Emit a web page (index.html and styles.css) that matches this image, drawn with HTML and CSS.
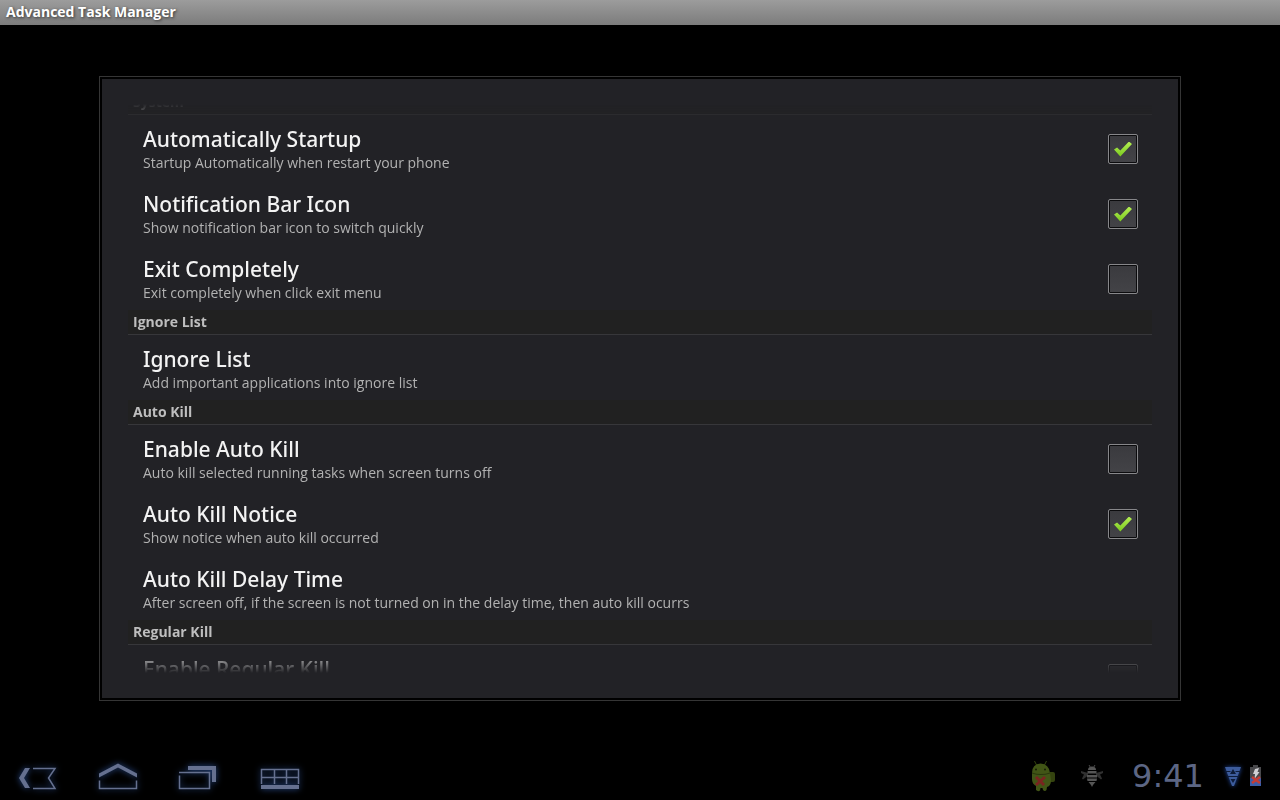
FILE: index.html
```html
<!DOCTYPE html>
<html lang="en">
<head>
<meta charset="utf-8">
<title>Advanced Task Manager</title>
<link rel="stylesheet" href="styles.css">
</head>
<body>
<header class="titlebar"><h1 class="titlebar-text">Advanced Task Manager</h1></header>
<main class="stage">
  <section class="panel">
    <div class="list">
      <h2 class="category category-first">System</h2>
      <label class="row"><span class="row-text"><span class="row-title">Automatically Startup</span><span class="row-summary">Startup Automatically when restart your phone</span></span><input class="check" type="checkbox" checked></label>
      <label class="row"><span class="row-text"><span class="row-title">Notification Bar Icon</span><span class="row-summary">Show notification bar icon to switch quickly</span></span><input class="check" type="checkbox" checked></label>
      <label class="row"><span class="row-text"><span class="row-title">Exit Completely</span><span class="row-summary">Exit completely when click exit menu</span></span><input class="check" type="checkbox"></label>
      <h2 class="category">Ignore List</h2>
      <button class="row" type="button"><span class="row-text"><span class="row-title">Ignore List</span><span class="row-summary">Add important applications into ignore list</span></span></button>
      <h2 class="category">Auto Kill</h2>
      <label class="row"><span class="row-text"><span class="row-title">Enable Auto Kill</span><span class="row-summary">Auto kill selected running tasks when screen turns off</span></span><input class="check" type="checkbox"></label>
      <label class="row"><span class="row-text"><span class="row-title">Auto Kill Notice</span><span class="row-summary">Show notice when auto kill occurred</span></span><input class="check" type="checkbox" checked></label>
      <button class="row" type="button"><span class="row-text"><span class="row-title">Auto Kill Delay Time</span><span class="row-summary">After screen off, if the screen is not turned on in the delay time, then auto kill ocurrs</span></span></button>
      <h2 class="category">Regular Kill</h2>
      <label class="row"><span class="row-text"><span class="row-title">Enable Regular Kill</span></span><input class="check" type="checkbox"></label>
    </div>
  </section>
</main>
<footer class="sysbar">
  <nav class="nav">
    <button class="nav-button" type="button" aria-label="Back"><svg class="nav-icon" viewBox="0 752 80 48"><path class="solid" d="M25 768h5l-6 10 6 10h-5l-6-10z"/><path class="line" d="M33 768.500H55L48.500 778 55 788.500H33"/></svg></button>
    <button class="nav-button" type="button" aria-label="Home"><svg class="nav-icon" viewBox="80 752 80 48"><path class="solid" d="M99 773.500 118 763.500l19 10v4L118 767.500l-19 10z"/><path class="line" d="M99.500 780.500v8h37v-8"/></svg></button>
    <button class="nav-button" type="button" aria-label="Recent apps"><svg class="nav-icon" viewBox="160 752 80 48"><path class="solid" d="M188 766h28v16h-4v-12h-24z"/><path class="line" d="M179 772.500h30.500v16h-30V775.500"/></svg></button>
    <button class="nav-button" type="button" aria-label="Keyboard"><svg class="nav-icon" viewBox="240 752 80 48"><path class="line" d="M261.500 784v-14.500h37V784M261 777.500h38M274.500 769v15M286.500 769v15"/><path class="solid" d="M261 785h38v4h-38z"/></svg></button>
  </nav>
  <div class="status">
    <svg class="icon-droid" viewBox="1030 760 26 34"><path d="m1034.500 762 2 4m10-4-2 4" stroke="#35460f"/><rect x="1048" y="773" width="7" height="10" rx="2" fill="#34430f"/><path fill="#415516" d="M1032 774q0-9 8.500-9.500 8.500.5 9.500 9.500l1 7q0 6-4 7l-.5 3q-1.500 2-3.500 0l-.5-2h-2l-.5 2.500q-2 1.500-4-.5v-4q-4-2-4-7z"/><path fill="#2a380e" d="M1032 773.500q9 3 18 0v1q-9 3-18 0z"/><circle cx="1036" cy="770.500" r="1" fill="#161d08"/><circle cx="1045" cy="770.500" r="1" fill="#161d08"/><path d="m1036 778 8 8m1-8-9 8" stroke="#7a2420" stroke-width="3"/></svg>
    <svg class="icon-bee" viewBox="1080 766 24 24"><path d="M1088 775l-7-2v2l3 1.500-2 4 1 1 5-4zM1096 775l7-2v2l-3 1.500 2 4-1 1-5-4z" fill="#303030"/><g fill="#555"><path d="M1088 772q0-3.500 4-3.500t4 3.500zM1087.500 773h9v2.500h-9zM1087 777h10v2.500h-10zM1087 780.500h10l-.5 2.500h-9zM1088.500 784h7l-2.500 3-1 2-1-2z"/></g><path d="m1089 767 1.500 2.500m4.500-2.500-1.500 2.500" stroke="#4b4b4b"/></svg>
    <time class="clock">9:41</time>
    <svg class="icon-wifi" viewBox="1224 764 18 24"><path fill="#3d5c9c" d="M1225 767h16l-7 19h-2z"/><path fill="none" stroke="#0d1c3a" d="M1226 771.500h4.500m5 0h4.500M1228 776.500h10"/><path fill="#0d1c3a" d="M1233 769l3 5h-6zM1230.500 779h5l-2.500 4z"/></svg>
    <svg class="icon-battery" viewBox="1249 764 14 24"><path fill="#48484b" d="M1253 765h5v2h3v12h-11v-12h3z"/><path fill="#3a5da8" d="M1250 778h11v8h-11z"/><path fill="#d0d0d4" d="m1255 769 4-1-1.500 4h2l-5 7 .5-5h-2z"/><path d="m1252 777 8 6m0-6-8 6" stroke="#c53c34" stroke-width="2.500"/></svg>
  </div>
</footer>
</body>
</html>
```
FILE: styles.css
```css
* { box-sizing: border-box; }
body {
  margin: 0;
  height: 100vh;
  display: flex;
  flex-direction: column;
  overflow: hidden;
  background: #000;
  color: #f3f3f3;
  font-family: "Open Sans", "Noto Sans", sans-serif;
}
button { border: 0; padding: 0; background: none; color: inherit; font: inherit; text-align: left; }
.titlebar {
  height: 25px;
  flex: none;
  padding: 0 6px;
  background: linear-gradient(#9c9c9c, #7c7c7c);
}
.titlebar-text { margin: 0; font-size: 14px; line-height: 24px; color: #fff; text-shadow: 1px 1px 3px #333; }
.stage { flex: 1; min-height: 0; padding: 51px 99px; display: flex; }
.panel {
  flex: 1;
  display: flex;
  border: 1px solid #353535;
  padding: 27px 28px;
  background: #222226;
  box-shadow: inset 0 0 0 2px #000;
}
.list {
  flex: 1;
  overflow: hidden;
  mask-image: linear-gradient(transparent, #000 24px, #000 calc(100% - 24px), transparent);
}
.category {
  height: 25px;
  margin: 0;
  padding: 0 5px;
  border-bottom: 1px solid #37373a;
  background: #212121;
  color: #bebebe;
  font-size: 14px;
  line-height: 24px;
}
.category-first { margin-top: -14px; }
.row { width: 100%; height: 65px; padding: 0 14px 0 15px; display: flex; align-items: center; }
.row-text { flex: 1; align-self: flex-start; padding-top: 10px; display: flex; flex-direction: column; }
.row-title { font-family: "Noto Sans", sans-serif; font-size: 21px; font-weight: 500; line-height: 28px; }
.row-summary { font-size: 14px; line-height: 20px; color: #b2b2b2; }
.check {
  appearance: none;
  width: 30px;
  height: 30px;
  margin: 3px 0 0;
  display: grid;
  place-items: center;
  border: 1px solid #87878a;
  border-radius: 2px;
  background: linear-gradient(#3a3a3e, #434347);
  box-shadow: inset 0 0 0 1px #0b0b0d;
}
.check:checked::before {
  content: "";
  width: 18px;
  height: 15px;
  background: linear-gradient(#b4ef52, #78c81e);
  clip-path: polygon(0 53%, 17% 40%, 35% 60%, 83% 0, 100% 17%, 35% 100%);
}
.sysbar { height: 48px; flex: none; display: flex; justify-content: space-between; }
.nav { display: flex; }
.nav-button, .nav-icon { width: 80px; height: 48px; display: block; }
.nav-icon { filter: drop-shadow(0 0 3px #2a4c8c); }
.solid { fill: #65708f; }
.line { fill: none; stroke: #65708f; stroke-width: 1.500; }
.status { display: flex; align-items: center; padding-right: 17px; }
.icon-droid { width: 26px; height: 34px; margin-right: 24px; }
.icon-bee { width: 24px; height: 24px; margin-right: 20px; }
.clock { min-width: 88px; text-align: center; font-family: "DejaVu Sans", sans-serif; font-size: 32px; line-height: 48px; color: #5c6684; }
.icon-wifi { width: 18px; height: 24px; margin: 0 7px 0 12px; filter: drop-shadow(0 0 2px #1f48a0); }
.icon-battery { width: 14px; height: 24px; }
```
